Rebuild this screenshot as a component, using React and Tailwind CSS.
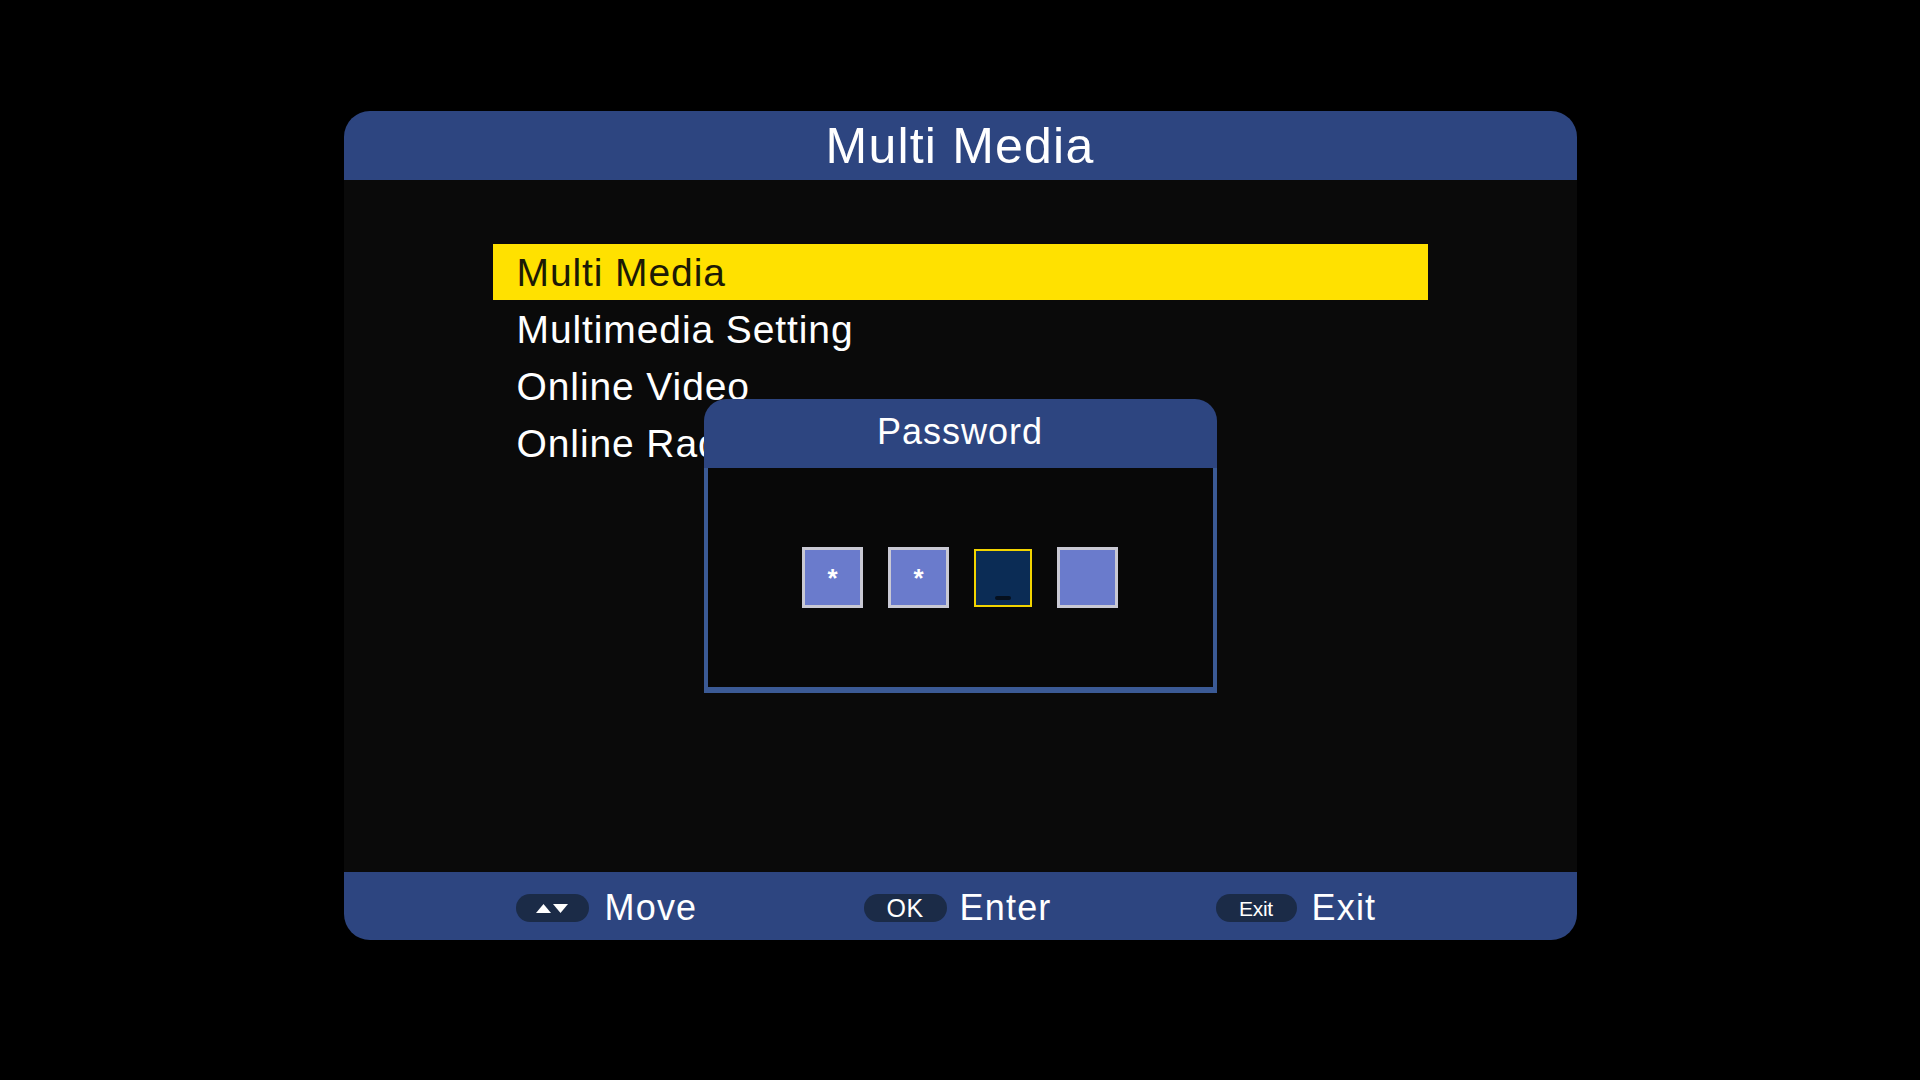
import React from 'react'

const MENU = ['Multi Media', 'Multimedia Setting', 'Online Video', 'Online Radio']

function Key({ children, w = 'w-[73px]' }) {
  return (
    <span className={`${w} h-[28px] rounded-full bg-[#1b2b47] flex items-center justify-center text-white`}>
      {children}
    </span>
  )
}

function PinBox({ filled, active }) {
  if (active) {
    return (
      <div className="w-[58px] h-[58px] border-2 border-[#f2d400] bg-[#0b2c55] flex items-end justify-center pb-[5px]">
        <span className="w-[16px] h-[4px] rounded-full bg-[#05101e]" />
      </div>
    )
  }
  return (
    <div className="w-[61px] h-[61px] border-[3px] border-[#c9c9d4] bg-[#6a7bcc] flex items-start justify-center pt-[15px]">
      {filled && <span className="text-white text-[26px] leading-none font-bold">*</span>}
    </div>
  )
}

export default function App() {
  return (
    <div className="min-h-screen w-full bg-black pt-[111px] font-['Liberation_Sans',Arial,sans-serif]">
      <div className="relative mx-auto w-[1233px]">
        {/* Title bar */}
        <div className="h-[69px] rounded-t-[26px] bg-[#2d4580] flex items-center justify-center text-white text-[50px] tracking-[1.2px] leading-none">
          Multi Media
        </div>

        {/* Menu */}
        <div className="h-[692px] bg-[#0a0a0a] pt-[64px] px-[149px]">
          {MENU.map((item, i) => (
            <div
              key={item}
              className={`flex items-center pl-[24px] text-[39px] tracking-[0.9px] leading-none ${
                i === 0 ? 'h-[56px] mb-px bg-[#ffe100] text-[#1c1a05]' : 'h-[57px] text-white'
              }`}
            >
              {item}
            </div>
          ))}
        </div>

        {/* Help bar */}
        <div className="h-[68px] rounded-b-[26px] bg-[#2d4580] flex items-center pt-[4px] pl-[172px] text-white text-[36px] tracking-[1.2px] leading-none">
          <div className="w-[348px] flex items-center gap-[16px]">
            <Key>
              <svg width="34" height="11" viewBox="0 0 34 11">
                <path d="M1 10 L8.5 1 L16 10 Z" fill="white" />
                <path d="M18 1 L33 1 L25.5 10 Z" fill="white" />
              </svg>
            </Key>
            Move
          </div>
          <div className="w-[352px] flex items-center gap-[13px]">
            <Key w="w-[83px]">
              <span className="text-[25px] tracking-[0.5px]">OK</span>
            </Key>
            Enter
          </div>
          <div className="flex items-center gap-[15px]">
            <Key w="w-[81px]">
              <span className="text-[21px] tracking-[-0.3px]">Exit</span>
            </Key>
            Exit
          </div>
        </div>

        {/* Password dialog */}
        <div className="absolute left-[360px] top-[288px] w-[513px] h-[294px] flex flex-col">
          <div className="h-[69px] rounded-t-[22px] bg-[#2d4580] flex items-center justify-center pb-[4px] text-white text-[36px] tracking-[1px] leading-none">
            Password
          </div>
          <div className="flex-1 bg-[#080808] border-x-4 border-b-[6px] border-[#3b5a95] flex items-center justify-center gap-[25px]">
            <PinBox filled />
            <PinBox filled />
            <PinBox active />
            <PinBox />
          </div>
        </div>
      </div>
    </div>
  )
}
